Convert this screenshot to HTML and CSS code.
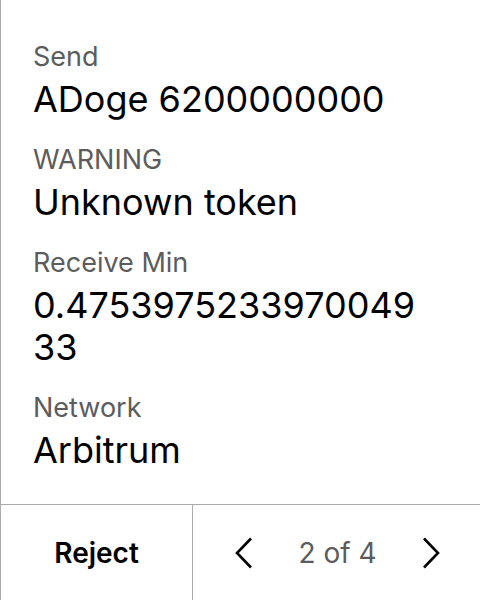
FILE: index.html
```html
<!DOCTYPE html>
<html>
<head>
<meta charset="utf-8">
<link rel="stylesheet" href="styles.css">
</head>
<body>
<div class="screen">
  <div class="details">
    <div class="field">
      <div class="label">Send</div>
      <div class="value">ADoge 6200000000</div>
    </div>
    <div class="field">
      <div class="label">WARNING</div>
      <div class="value">Unknown token</div>
    </div>
    <div class="field">
      <div class="label">Receive Min</div>
      <div class="value">0.475397523397004933</div>
    </div>
    <div class="field">
      <div class="label">Network</div>
      <div class="value">Arbitrum</div>
    </div>
  </div>
  <div class="footer">
    <div class="reject">Reject</div>
    <div class="pager">
      <svg class="chev" width="18" height="32" viewBox="0 0 18 32"><polyline points="16,1.5 2,16 16,30.5" fill="none" stroke="#000" stroke-width="2.6"/></svg>
      <span class="count">2 of 4</span>
      <svg class="chev" width="18" height="32" viewBox="0 0 18 32"><polyline points="2,1.5 16,16 2,30.5" fill="none" stroke="#000" stroke-width="2.6"/></svg>
    </div>
  </div>
</div>
</body>
</html>
```
FILE: styles.css
```css
html, body {
  margin: 0;
  padding: 0;
  background: #fff;
}
.screen {
  width: 479px;
  height: 600px;
  border-left: 1px solid #ababab;
  display: flex;
  flex-direction: column;
  font-family: Inter, "Noto Sans", sans-serif;
}
.details {
  flex: 1;
  padding: 40px 32px 0 32px;
  display: flex;
  flex-direction: column;
  gap: 23px;
}
.field {
  display: flex;
  flex-direction: column;
  gap: 4px;
}
.label {
  font-size: 27px;
  line-height: 34px;
  color: #5c5c5c;
}
.value {
  font-size: 36px;
  line-height: 42px;
  color: #000;
  word-break: break-all;
  width: 400px;
}
.footer {
  height: 95px;
  border-top: 1px solid #ababab;
  display: flex;
}
.reject {
  width: 191px;
  border-right: 1px solid #ababab;
  display: flex;
  align-items: center;
  justify-content: center;
  font-size: 28px;
  font-weight: 600;
  color: #000;
}
.pager {
  flex: 1;
  display: flex;
  align-items: center;
  justify-content: space-between;
  padding: 0 40px 0 42px;
}
.count {
  font-size: 28px;
  color: #5c5c5c;
}
.chev {
  display: block;
}
```
